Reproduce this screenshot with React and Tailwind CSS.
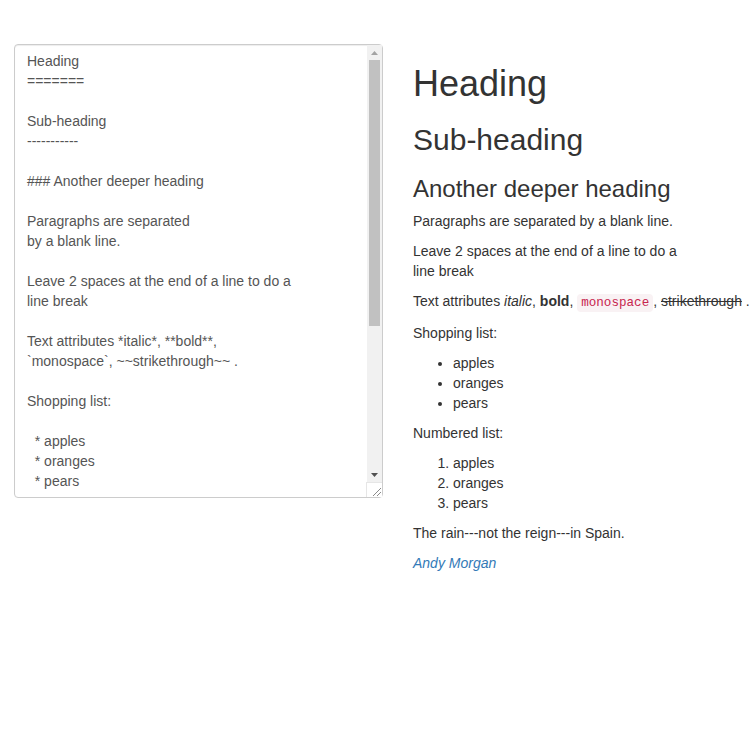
import React from "react";

const md = `Heading
=======

Sub-heading
-----------

### Another deeper heading

Paragraphs are separated
by a blank line.

Leave 2 spaces at the end of a line to do a
line break

Text attributes *italic*, **bold**,
\`monospace\`, ~~strikethrough~~ .

Shopping list:

  * apples
  * oranges
  * pears

Numbered list:

  1. apples
  2. oranges
  3. pears

The rain---not the reign---in Spain.

 *[Andy Morgan](https://www.freecodecamp.com/andymorgan)*`;

function FakeScrollbar() {
  return (
    <div className="absolute top-[1px] right-[1px] bottom-[1px] w-[15px] flex flex-col pointer-events-none">
      <div className="flex-1 flex flex-col bg-[#f1f1f1]">
        <div className="h-[15px] flex items-center justify-center">
          <svg width="7" height="4" viewBox="0 0 7 4">
            <polygon points="3.5,0 7,4 0,4" fill="#a3a3a3" />
          </svg>
        </div>
        <div className="h-[266px] mx-[2px] bg-[#c1c1c1]" />
        <div className="flex-1" />
        <div className="h-[15px] flex items-center justify-center">
          <svg width="7" height="4" viewBox="0 0 7 4">
            <polygon points="0,0 7,0 3.5,4" fill="#505050" />
          </svg>
        </div>
      </div>
      <div className="h-[15px] bg-white border-t border-l border-[#e6e6e6] -ml-[1px] w-[16px] flex items-end justify-end">
        <svg width="14" height="14" viewBox="0 0 14 14">
          <line x1="13" y1="5" x2="5" y2="13" stroke="#8a8a8a" strokeWidth="1" />
          <line x1="13" y1="9" x2="9" y2="13" stroke="#8a8a8a" strokeWidth="1" />
        </svg>
      </div>
    </div>
  );
}

export default function App() {
  return (
    <div
      className="flex items-start pt-[44px] pl-[14px] bg-white text-[#333] text-[14px] leading-[20px]"
      style={{ fontFamily: '"Liberation Sans", Arial, sans-serif' }}
    >
      <div className="relative w-[369px] h-[454px] shrink-0">
        <textarea
          className="block w-full h-full border border-[#ccc] rounded-[4px] pl-[12px] pr-[27px] py-[6px] text-[14px] leading-[20px] text-[#555] bg-white shadow-[inset_0_1px_1px_rgba(0,0,0,0.075)] outline-none resize-none overflow-hidden"
          style={{ fontFamily: '"Liberation Sans", Arial, sans-serif' }}
          defaultValue={md}
          spellCheck={false}
        />
        <FakeScrollbar />
      </div>
      <div className="ml-[30px] min-w-0 whitespace-nowrap">
        <h1 className="mt-[20px] mb-[10px] text-[36px] leading-[1.1] font-normal">Heading</h1>
        <h2 className="mt-[19px] mb-[10px] text-[30px] leading-[1.1] font-normal">Sub-heading</h2>
        <h3 className="mt-[20px] mb-[9px] text-[24px] leading-[1.1] font-normal">Another deeper heading</h3>
        <p className="mb-[10px]">Paragraphs are separated by a blank line.</p>
        <p className="mb-[10px]">
          Leave 2 spaces at the end of a line to do a<br />line break
        </p>
        <p className="mb-[10px]">
          Text attributes <em>italic</em>, <strong className="font-bold">bold</strong>,{" "}
          <code
            className="px-[4px] py-[2px] text-[90%] text-[#c7254e] bg-[#f9f2f4] rounded-[4px]"
            style={{ fontFamily: '"Liberation Mono", "Courier New", monospace' }}
          >
            monospace
          </code>
          , <del>strikethrough</del> .
        </p>
        <p className="mb-[10px]">Shopping list:</p>
        <ul className="mb-[10px] pl-[40px] list-disc">
          <li>apples</li>
          <li>oranges</li>
          <li>pears</li>
        </ul>
        <p className="mb-[10px]">Numbered list:</p>
        <ol className="mb-[10px] pl-[40px] list-decimal">
          <li>apples</li>
          <li>oranges</li>
          <li>pears</li>
        </ol>
        <p className="mb-[10px]">The rain---not the reign---in Spain.</p>
        <p className="mb-[10px]">
          <em>
            <a href="#" className="text-[#337ab7] no-underline">Andy Morgan</a>
          </em>
        </p>
      </div>
    </div>
  );
}
